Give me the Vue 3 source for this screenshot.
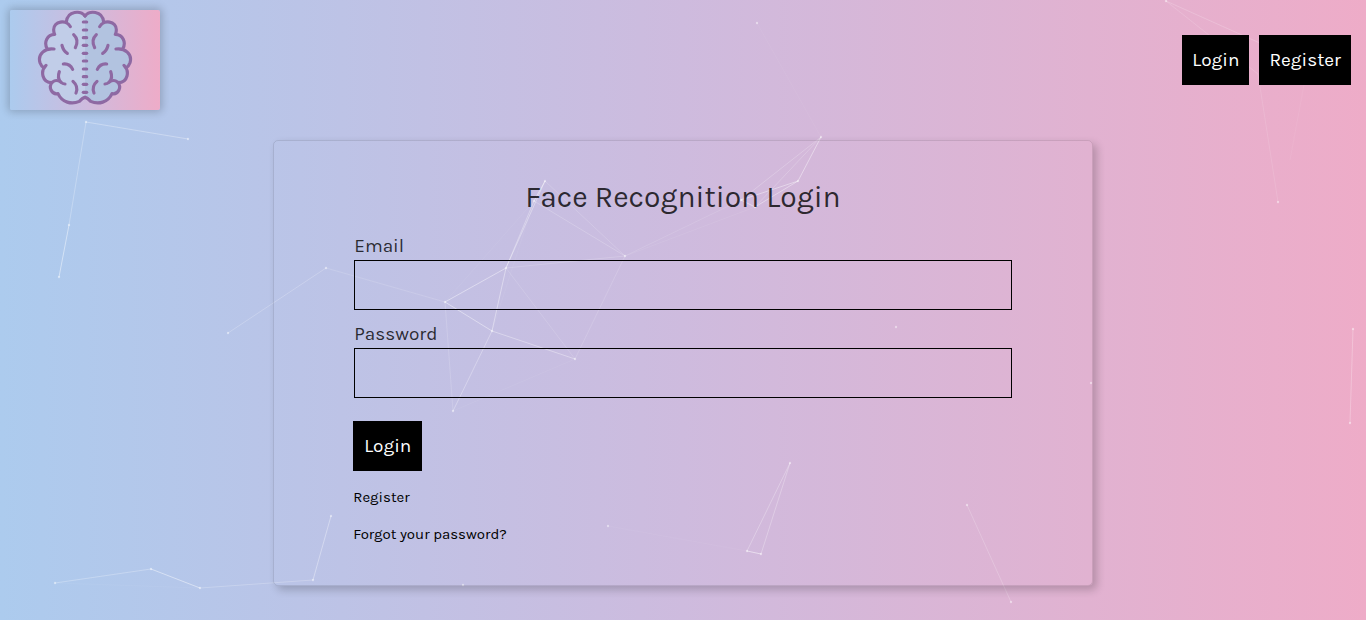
<script setup>
import { ref } from 'vue'

const email = ref('')
const password = ref('')

const dots = [
  [86, 122], [188, 139], [69, 225], [59, 277], [228, 333], [326, 268], [445, 302],
  [506, 268], [545, 181], [534, 201], [625, 256], [492, 331], [575, 359], [453, 411],
  [821, 137], [798, 181], [741, 200], [755, 207], [757, 23], [896, 327], [1091, 383],
  [1166, 1], [1278, 202], [1353, 329], [1350, 423], [790, 463], [747, 551], [761, 554],
  [608, 526], [967, 505], [1011, 602], [55, 583], [151, 569], [200, 588], [313, 580],
  [331, 516], [463, 585]
]

// start x, start y, end x, end y, opacity
const links = [
  [86, 122, 188, 139, 0.3], [86, 122, 69, 225, 0.26], [69, 225, 59, 277, 0.45],
  [228, 333, 326, 268, 0.22], [326, 268, 445, 302, 0.14], [445, 302, 506, 268, 0.42],
  [445, 302, 492, 331, 0.42], [506, 268, 492, 331, 0.4], [506, 268, 545, 181, 0.35],
  [506, 268, 534, 201, 0.3], [534, 201, 545, 181, 0.45], [545, 181, 625, 256, 0.16],
  [534, 201, 625, 256, 0.2], [506, 268, 625, 256, 0.16], [506, 268, 575, 359, 0.14],
  [492, 331, 575, 359, 0.35], [625, 256, 575, 359, 0.14], [445, 302, 453, 411, 0.15],
  [492, 331, 453, 411, 0.3], [453, 411, 575, 359, 0.06], [445, 302, 534, 201, 0.06],
  [492, 331, 534, 201, 0.06], [625, 256, 741, 200, 0.12], [625, 256, 755, 207, 0.08],
  [821, 137, 798, 181, 0.42], [821, 137, 741, 200, 0.22], [821, 137, 755, 207, 0.2],
  [798, 181, 741, 200, 0.4], [798, 181, 755, 207, 0.4], [741, 200, 755, 207, 0.45],
  [757, 23, 821, 137, 0.05], [1166, 1, 1262, 44, 0.18], [1166, 1, 1258, 74, 0.14],
  [1258, 74, 1278, 202, 0.12], [1306, 74, 1290, 160, 0.06], [1353, 329, 1350, 423, 0.25],
  [790, 463, 747, 551, 0.28], [790, 463, 761, 554, 0.28], [747, 551, 761, 554, 0.5],
  [608, 526, 747, 551, 0.04], [967, 505, 1011, 602, 0.2], [55, 583, 151, 569, 0.26],
  [151, 569, 200, 588, 0.45], [200, 588, 313, 580, 0.22], [313, 580, 331, 516, 0.35],
  [55, 583, 200, 588, 0.04]
]

const stitches = [66, 90, 113, 136, 160, 183, 207, 230, 253, 277]
</script>

<template>
  <div class="page">
    <svg class="particles" viewBox="0 0 1366 620" preserveAspectRatio="xMidYMid slice" aria-hidden="true">
      <line
        v-for="(l, i) in links" :key="'l' + i"
        :x1="l[0]" :y1="l[1]" :x2="l[2]" :y2="l[3]" :stroke-opacity="l[4]"
      />
      <circle v-for="(d, i) in dots" :key="'d' + i" :cx="d[0]" :cy="d[1]" r="1.2" />
    </svg>

    <header class="top">
      <div class="logo">
        <svg viewBox="30 30 450 300" role="img" aria-label="Brain">
          <defs>
            <path
              id="lobes"
              d="M255 48 C243 32 203 30 199 66 L211 80 C200 58 160 62 161 90 Q161 97 164 103 C142 104 130 126 142 148 C122 152 112 170 120 188 Q124 198 132 204 C122 222 130 246 153 248 C144 262 150 278 162 281 Q168 283 174 281 C184 308 215 314 238 304 Q248 292 255 292 Z"
            />
            <g id="folds">
              <path d="M255 48 C243 32 203 30 199 66 M211 80 C200 58 160 62 161 90 Q161 97 164 103 C142 104 130 126 142 148 M162 147 C136 143 112 162 120 188 Q124 199 132 204 M138 196 C120 214 127 248 155 248 M182 246 C164 234 145 250 153 270 Q160 284 174 281 C186 308 215 314 238 304 Q248 293 255 292" />
              <path d="M221 104 Q238 120 226 143 M186 136 Q190 153 202 160 M190 192 Q209 190 218 208 M178 215 Q171 234 182 246 Q188 252 195 252 M219 244 Q236 259 228 279" />
            </g>
          </defs>
          <use href="#lobes" class="half-left" />
          <use href="#lobes" class="half-right" transform="translate(510 0) scale(-1 1)" />
          <g class="strokes">
            <use href="#folds" />
            <use href="#folds" transform="translate(510 0) scale(-1 1)" />
            <line v-for="y in stitches" :key="y" x1="250" :y1="y" x2="260" :y2="y" />
          </g>
        </svg>
      </div>
      <nav class="nav">
        <button type="button" class="btn">Login</button>
        <button type="button" class="btn">Register</button>
      </nav>
    </header>

    <main class="card">
      <form @submit.prevent>
        <h1>Face Recognition Login</h1>
        <div class="field">
          <label for="email">Email</label>
          <input id="email" v-model="email" type="email">
        </div>
        <div class="field">
          <label for="password">Password</label>
          <input id="password" v-model="password" type="password">
        </div>
        <button type="submit" class="btn submit">Login</button>
        <div class="more">
          <a href="#register">Register</a>
          <a href="#forgot">Forgot your password?</a>
        </div>
      </form>
    </main>
  </div>
</template>

<style>
body {
  margin: 0;
}
</style>

<style scoped>
.page {
  position: relative;
  box-sizing: border-box;
  min-height: 100vh;
  padding-bottom: 34px;
  background: linear-gradient(to right, #accbee, #cebbde 50%, #eeacc8);
  font-family: Karla, "Open Sans", "Noto Sans", sans-serif;
  font-size: 19px;
  color: rgba(0, 0, 0, 0.8);
}
.particles {
  position: absolute;
  inset: 0;
  width: 100%;
  height: 100%;
  stroke: #fff;
}
.particles circle {
  fill: #fff;
  fill-opacity: 0.45;
  stroke: none;
}
.top {
  position: relative;
  display: flex;
  justify-content: space-between;
  align-items: center;
  padding: 10px 15px 10px 10px;
}
.logo {
  width: 150px;
  height: 100px;
  border-radius: 2px;
  background: linear-gradient(to right, #accbee, #cebbde 50%, #eeacc8);
  box-shadow: 0 0 8px 2px rgba(0, 0, 0, 0.2);
}
.logo svg {
  display: block;
  width: 100%;
  height: 100%;
}
.half-left {
  fill: #c1cde8;
}
.half-right {
  fill: #b2c3e0;
}
.strokes {
  fill: none;
  stroke: #8e69a3;
  stroke-width: 9.5;
  stroke-linecap: round;
  stroke-linejoin: round;
}
.nav {
  display: flex;
  gap: 10px;
}
.btn {
  height: 50px;
  padding: 0 10px;
  border: 0;
  background: #000;
  color: #fff;
  font: inherit;
  cursor: pointer;
}
.card {
  position: relative;
  box-sizing: border-box;
  width: 60%;
  margin: 20px auto 0;
  padding: 36px 79px 41px;
  border: 1px solid rgba(0, 0, 0, 0.1);
  border-radius: 5px;
  box-shadow: 4px 4px 8px 0 rgba(0, 0, 0, 0.2);
}
h1 {
  margin: 0 0 15px;
  font-size: 30px;
  line-height: 40px;
  font-weight: 400;
  text-align: center;
}
.field {
  margin: 0 1px 10px;
}
.field label {
  display: block;
  line-height: 28px;
}
.field input {
  display: block;
  box-sizing: border-box;
  width: 100%;
  height: 50px;
  padding: 8px;
  border: 1px solid #000;
  border-radius: 0;
  background: transparent;
  font: inherit;
}
.submit {
  display: block;
  margin-top: 23px;
  padding: 0 11px;
}
.more {
  display: flex;
  flex-direction: column;
  align-items: flex-start;
  gap: 17px;
  margin-top: 16px;
}
.more a {
  font-size: 15px;
  line-height: 20px;
  color: #000;
  text-decoration: none;
}
</style>
